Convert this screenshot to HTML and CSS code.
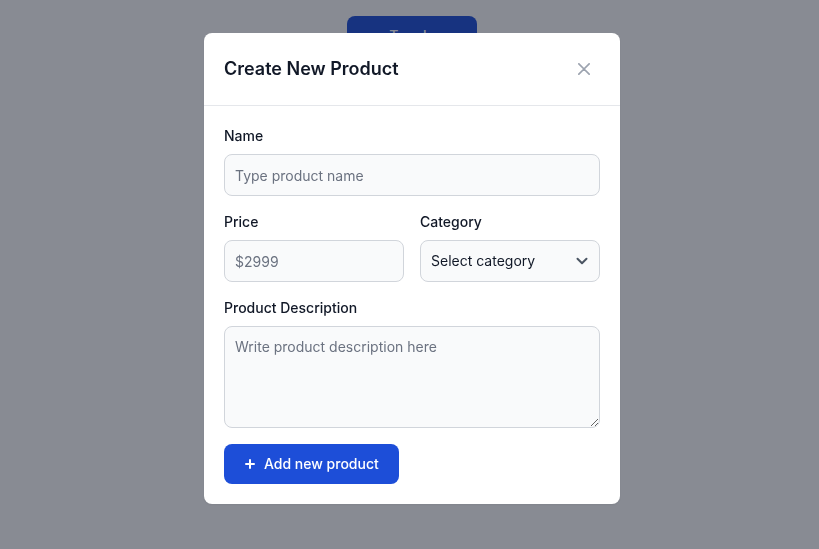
FILE: index.html
```html
<!DOCTYPE html>
<html lang="en">
<head>
<meta charset="utf-8">
<title>Create New Product</title>
<link rel="stylesheet" href="styles.css">
</head>
<body>
<div class="page">
  <button class="toggle-btn" type="button">Toggle modal</button>
</div>
<div class="overlay">
  <div class="modal">
    <div class="modal-header">
      <h3 class="modal-title">Create New Product</h3>
      <button class="close-btn" type="button" aria-label="Close modal">
        <svg width="12" height="12" viewBox="0 0 14 14" fill="none"><path d="m1 1 6 6m0 0 6 6M7 7l6-6M7 7l-6 6" stroke="currentColor" stroke-width="2" stroke-linecap="round" stroke-linejoin="round"/></svg>
      </button>
    </div>
    <form class="modal-body">
      <div class="grid">
        <div class="field full">
          <label class="label" for="name">Name</label>
          <input class="input" id="name" type="text" placeholder="Type product name">
        </div>
        <div class="field">
          <label class="label" for="price">Price</label>
          <input class="input" id="price" type="number" placeholder="$2999">
        </div>
        <div class="field">
          <label class="label" for="category">Category</label>
          <div class="select-wrap">
            <select class="input select" id="category">
              <option selected>Select category</option>
              <option>TV/Monitors</option>
              <option>PC</option>
              <option>Gaming/Console</option>
              <option>Phones</option>
            </select>
            <svg class="chevron" width="12" height="8" viewBox="0 0 12 8" fill="none"><path d="M1.5 1.8 6 6.2l4.5-4.4" stroke="#4b5563" stroke-width="2" stroke-linecap="round" stroke-linejoin="round"/></svg>
          </div>
        </div>
        <div class="field full">
          <label class="label" for="description">Product Description</label>
          <textarea class="input textarea" id="description" rows="4" placeholder="Write product description here"></textarea>
        </div>
      </div>
      <button class="submit-btn" type="submit">
        <svg width="20" height="20" viewBox="0 0 20 20" fill="currentColor"><path fill-rule="evenodd" d="M10 5a1 1 0 011 1v3h3a1 1 0 110 2h-3v3a1 1 0 11-2 0v-3H6a1 1 0 110-2h3V6a1 1 0 011-1z" clip-rule="evenodd"/></svg>
        Add new product
      </button>
    </form>
  </div>
</div>
</body>
</html>
```
FILE: styles.css
```css
* { box-sizing: border-box; }
html, body { margin: 0; padding: 0; }
body {
  font-family: Inter, "Noto Sans", "Liberation Sans", sans-serif;
  background: #ffffff;
  color: #111827;
  width: 819px;
  height: 549px;
  overflow: hidden;
}
.page {
  display: flex;
  justify-content: center;
  padding-top: 16px;
  padding-left: 5px;
}
.toggle-btn {
  font-family: inherit;
  font-size: 14px;
  font-weight: 500;
  line-height: 20px;
  color: #ffffff;
  background: #1d4ed8;
  border: none;
  border-radius: 8px;
  padding: 10px 20px;
  width: 130px;
}
.overlay {
  position: fixed;
  inset: 0;
  background: rgba(17, 24, 39, 0.5);
  display: flex;
  justify-content: center;
  align-items: flex-start;
  padding-top: 33px;
  padding-left: 5px;
}
.modal {
  width: 416px;
  background: #ffffff;
  border-radius: 8px;
  box-shadow: 0 1px 2px rgba(0,0,0,0.05);
}
.modal-header {
  display: flex;
  align-items: center;
  justify-content: space-between;
  padding: 20px;
  border-bottom: 1px solid #e5e7eb;
  height: 73px;
}
.modal-title {
  margin: 0;
  font-size: 18px;
  line-height: 28px;
  font-weight: 600;
  color: #111827;
}
.close-btn {
  width: 32px;
  height: 32px;
  display: flex;
  align-items: center;
  justify-content: center;
  border: none;
  background: transparent;
  color: #9ca3af;
  border-radius: 8px;
  padding: 0;
}
.modal-body {
  padding: 20px;
  margin: 0;
}
.grid {
  display: grid;
  grid-template-columns: 1fr 1fr;
  gap: 16px;
  margin-bottom: 16px;
}
.field { display: flex; flex-direction: column; min-width: 0; }
.full { grid-column: span 2; }
.label {
  font-size: 14px;
  line-height: 20px;
  font-weight: 500;
  color: #111827;
  margin-bottom: 8px;
}
.input {
  font-family: inherit;
  font-size: 14px;
  line-height: 20px;
  color: #111827;
  background: #f9fafb;
  border: 1px solid #d1d5db;
  border-radius: 8px;
  padding: 10px;
  width: 100%;
  height: 42px;
  outline: none;
  margin: 0;
}
.input::placeholder { color: #6b7280; opacity: 1; }
.input[type=number]::-webkit-inner-spin-button,
.input[type=number]::-webkit-outer-spin-button { -webkit-appearance: none; margin: 0; }
.select-wrap { position: relative; }
.select {
  appearance: none;
  -webkit-appearance: none;
  padding-right: 32px;
}
.chevron {
  position: absolute;
  right: 12px;
  top: 17px;
  pointer-events: none;
}
.textarea {
  height: 102px;
  resize: vertical;
  display: block;
}
.submit-btn {
  display: inline-flex;
  align-items: center;
  font-family: inherit;
  font-size: 14px;
  line-height: 20px;
  font-weight: 500;
  color: #ffffff;
  background: #1d4ed8;
  border: none;
  border-radius: 8px;
  padding: 10px 20px;
  height: 40px;
}
.submit-btn svg {
  margin-left: -4px;
  margin-right: 4px;
}
```
